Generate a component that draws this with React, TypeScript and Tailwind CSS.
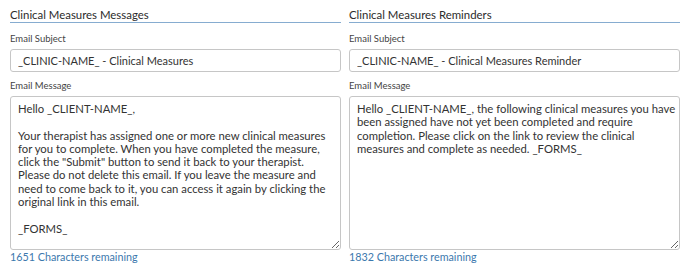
import React from "react"

const messageBody =
  'Hello _CLIENT-NAME_,\n\nYour therapist has assigned one or more new clinical measures for you to complete. When you have completed the measure, click the "Submit" button to send it back to your therapist. Please do not delete this email. If you leave the measure and need to come back to it, you can access it again by clicking the original link in this email.\n\n_FORMS_'

const reminderBody =
  "Hello _CLIENT-NAME_, the following clinical measures you have been assigned have not yet been completed and require completion. Please click on the link to review the clinical measures and complete as needed. _FORMS_"

type MessageColumnProps = {
  title: string
  subject: string
  body: string
  remaining: number
  bodyPadding: string
}

function MessageColumn({ title, subject, body, remaining, bodyPadding }: MessageColumnProps) {
  return (
    <div className="flex w-[331px] flex-col">
      <h3 className="border-b border-[#86acd0] pt-[8px] text-[11.4px] leading-[14px] font-normal text-[#2b2b2b]">
        {title}
      </h3>

      <label className="mt-[10px] text-[9.5px] leading-[12px] text-[#444]">Email Subject</label>
      <input
        readOnly
        value={subject}
        className="mt-[4px] h-[23px] w-full rounded-[3px] border border-[#c6c6c6] bg-white px-[7px] text-[11px] text-[#333] outline-none"
      />

      <label className="mt-[8px] text-[9.5px] leading-[12px] text-[#444]">Email Message</label>
      <textarea
        readOnly
        value={body}
        className={`mt-[4px] h-[154px] w-full rounded-[3px] border border-[#c6c6c6] bg-white pt-[5px] pl-[7px] text-[11.3px] leading-[13.3px] text-[#333] outline-none ${bodyPadding}`}
      />

      <span className="text-[10.75px] leading-[14px] text-[#3b78ad]">{remaining} Characters remaining</span>
    </div>
  )
}

export default function App() {
  return (
    <div className="flex h-[271px] w-[688px] gap-2 bg-white pr-2 pl-[10px] font-['Lato',sans-serif]">
      <MessageColumn
        title="Clinical Measures Messages"
        subject="_CLINIC-NAME_ - Clinical Measures"
        body={messageBody}
        remaining={1651}
        bodyPadding="pr-[7px]"
      />
      <MessageColumn
        title="Clinical Measures Reminders"
        subject="_CLINIC-NAME_ - Clinical Measures Reminder"
        body={reminderBody}
        remaining={1832}
        bodyPadding="pr-[2px]"
      />
    </div>
  )
}
